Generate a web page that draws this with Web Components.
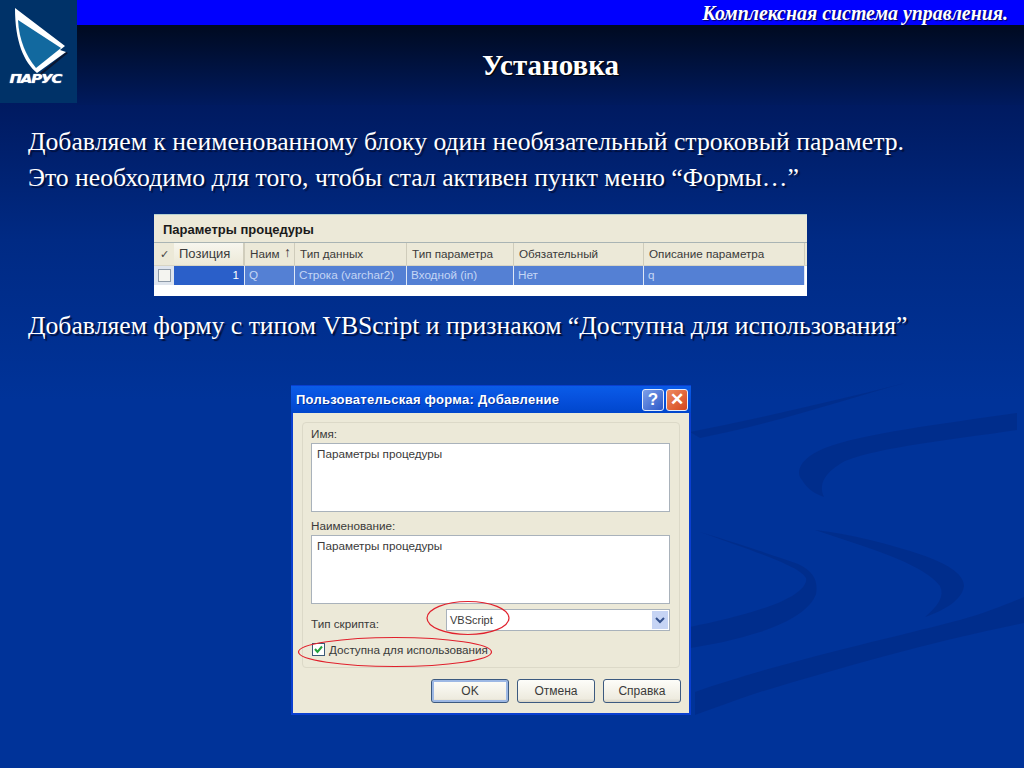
<!DOCTYPE html>
<html lang="ru">
<head>
<meta charset="utf-8">
<title>Установка</title>
<style>
  html, body { margin: 0; padding: 0; }
  body { width: 1024px; height: 768px; overflow: hidden; background: #003399; font-family: "Liberation Serif", serif; }
</style>
</head>
<body>
<slide-page>
  <slide-header slot="header" caption="Комплексная система управления." title="Установка"></slide-header>
  <slide-text>Добавляем к неименованному блоку один необязательный строковый параметр.</slide-text>
  <slide-text>Это необходимо для того, чтобы стал активен пункт меню “Формы…”</slide-text>
  <params-grid></params-grid>
  <slide-text class="third">Добавляем форму с типом VBScript и признаком “Доступна для использования”</slide-text>
  <form-dialog></form-dialog>
</slide-page>

<script>
// Slide frame: background swooshes plus the flow of the content
class SlidePage extends HTMLElement {
  constructor() {
    super();
    this.attachShadow({ mode: 'open' });
  }

  connectedCallback() {
    this.shadowRoot.innerHTML = `
      <style>
        :host { display: block; position: relative; width: 1024px; height: 768px; overflow: hidden;
          background: linear-gradient(#001a60 0, #001a60 103px, #002a84 240px, #003399 400px); }
        svg { position: absolute; left: 0; top: 0; }
        .content { position: relative; display: flex; flex-direction: column; padding-top: 21px; }
        header { position: relative; }
      </style>
      <svg width="1024" height="768" viewBox="0 0 1024 768">
        <g fill="#002c88" opacity=".75">
          <path d="M690 432C760 418 830 402 905 383C850 398 780 422 700 438Z"/>
          <path d="M1017 413C940 424 860 434 825 448C800 458 795 472 802 480C808 490 816 494 824 497C818 484 825 472 845 461C880 447 950 440 1017 430Z"/>
          <path d="M700 532C740 544 775 556 798 564C815 572 818 582 816 594C810 610 790 622 760 632C735 640 710 645 690 648V627C715 622 745 615 770 606C795 597 808 586 806 578C800 566 750 550 700 532Z"/>
          <path d="M815 530C850 534 890 544 925 556C950 565 964 575 964 586C962 600 945 610 925 617C938 606 945 596 940 586C930 572 900 558 860 545C845 540 830 535 815 530Z"/>
          <path d="M1024 597V623C930 642 840 668 760 692C735 700 715 708 695 715V692C780 662 900 636 960 620C985 613 1005 605 1024 597Z"/>
        </g>
      </svg>
      <header><slot name="header"></slot></header>
      <div class="content"><slot></slot></div>
    `;
  }
}
customElements.define('slide-page', SlidePage);

class SlideHeader extends HTMLElement {
  constructor() {
    super();
    this.attachShadow({ mode: 'open' });
  }

  connectedCallback() {
    this.shadowRoot.innerHTML = `
      <style>
        :host { display: flex; height: 103px; font-family: "Liberation Serif", serif; color: #fff; }
        .logo { width: 77px; flex: none; background: #003268; display: flex; flex-direction: column; }
        .logo svg { display: block; }
        .brand { font: italic 900 12.5px/10px "DejaVu Sans", sans-serif; letter-spacing: -1px; margin: -2px 0 0 14px; width: 45px; transform: scaleX(1.2); text-shadow: 0 0 1px #fff; }
        .right { flex: 1; display: flex; flex-direction: column; }
        .top { height: 25px; background: #0000ff; text-align: right; padding-right: 16px; white-space: nowrap;
          font: italic bold 19.9px/27px "Liberation Serif", serif; text-shadow: 1px 1px 1px #000066; }
        .mid { flex: 1; background: linear-gradient(#000a20, #001a5e); text-align: center;
          font: bold 29px/80px "Liberation Serif", serif; text-shadow: 1px 1px 1px #000; }
        .strip { height: 9px; background: linear-gradient(90deg, #1236b0, #3a4fb0); }
      </style>
      <div class="logo">
        <svg width="77" height="76" viewBox="0 0 77 76">
          <path d="M39 74L66 52L68 53L40 76Z" fill="#0a1630"/>
          <path d="M15 8L65 46L60 50L66 52L37 73C24 62 15 42 15 8Z" fill="#fff"/>
          <path d="M18 20L61 48L36 68C26 56 19 40 18 20Z" fill="#12699f"/>
        </svg>
        <div class="brand">ПАРУС</div>
      </div>
      <div class="right">
        <div class="top">${this.getAttribute('caption')}</div>
        <div class="mid">${this.getAttribute('title')}</div>
        <div class="strip"></div>
      </div>
    `;
  }
}
customElements.define('slide-header', SlideHeader);

class SlideText extends HTMLElement {
  constructor() {
    super();
    this.attachShadow({ mode: 'open' });
  }

  connectedCallback() {
    this.shadowRoot.innerHTML = `
      <style>
        :host { display: block; padding-left: 28px; color: #fff; white-space: nowrap;
          font: 25.7px/36px "Liberation Serif", serif; text-shadow: 2px 2px 1px #00103c; }
        :host(.third) { margin-top: 12px; }
      </style>
      <slot></slot>
    `;
  }
}
customElements.define('slide-text', SlideText);

// Screenshot of the "Параметры процедуры" grid
class ParamsGrid extends HTMLElement {
  constructor() {
    super();
    this.attachShadow({ mode: 'open' });
  }

  connectedCallback() {
    const cols = [
      ['Наим', 50], ['Тип данных', 112], ['Тип параметра', 107], ['Обязательный', 130], ['Описание параметра', 161]
    ];
    const vals = ['Q', 'Строка (varchar2)', 'Входной (in)', 'Нет', 'q'];
    const head = cols.map(([t, w], i) => `<div class="h" style="width:${w}px">${t}${i === 0 ? '<i>↑</i>' : ''}</div>`).join('');
    const row = cols.map(([, w], i) => `<div class="c" style="width:${w}px">${vals[i]}</div>`).join('');
    this.shadowRoot.innerHTML = `
      <style>
        :host { display: block; width: 653px; height: 82px; margin: 18px 0 0 154px; background: #fff;
          font: 11.7px/1 "Liberation Sans", sans-serif; color: #3a3a3a; overflow: hidden; }
        .title { box-sizing: border-box; height: 29px; background: #ece9d8; border-top: 1px solid #b4d0d0; border-bottom: 1px solid #a9b4b4;
          font-size: 13px; font-weight: bold; padding: 8px 0 0 9px; color: #1a1a1a; }
        .heads, .row { display: flex; }
        .heads { box-sizing: border-box; height: 23px; background: #ece9d8; border-bottom: 1px solid #d8d5c4; }
        .check { width: 20px; flex: none; text-align: center; line-height: 22px; color: #444; font-size: 11px; }
        .h { box-sizing: border-box; flex: none; padding: 5px 0 0 5px; border-right: 1px solid #cfccbb; white-space: nowrap; overflow: hidden; position: relative; }
        .h i { font-style: normal; font-size: 14px; font-weight: bold; position: absolute; right: 3px; top: 2px; }
        .pos { width: 71px; font-size: 13px; padding: 4px 0 0 5px; background: linear-gradient(#f7f6ee, #ece9d8); border-right: 2px solid #d0cdbc; }
        .row { width: 651px; height: 19px; background: #5480d4; color: #c4d6f4; }
        .box { width: 20px; flex: none; background: #dfe5ee; display: flex; align-items: center; justify-content: center; }
        .box b { width: 11px; height: 11px; background: #f4f4f0; border: 1px solid #8e9aa8; }
        .num { box-sizing: border-box; width: 71px; text-align: right; padding: 3px 5px 0 0; background: #2a5fc9; color: #fff; border-right: 1px solid #dfe8f6; }
        .c { box-sizing: border-box; flex: none; padding: 3px 0 0 4px; border-right: 1px solid #dfe8f6; white-space: nowrap; }
      </style>
      <div class="title">Параметры процедуры</div>
      <div class="heads"><div class="check">✓</div><div class="h pos">Позиция</div>${head}</div>
      <div class="row"><div class="box"><b></b></div><div class="num">1</div>${row}</div>
    `;
  }
}
customElements.define('params-grid', ParamsGrid);

// Screenshot of the XP style dialog, with the two red ovals drawn over it
class FormDialog extends HTMLElement {
  constructor() {
    super();
    this.attachShadow({ mode: 'open' });
  }

  connectedCallback() {
    this.shadowRoot.innerHTML = `
      <style>
        :host { display: block; position: relative; box-sizing: border-box; width: 400px; height: 330px; margin: 41px 0 0 291px;
          background: #ece9d8; border: solid #0a3fd0; border-width: 1px 2px 2px 2px;
          font: 11.7px/1 "Liberation Sans", sans-serif; color: #3a3a3a; }
        .bar { display: flex; align-items: center; height: 27px; margin: 0 -2px; padding: 0 3px 0 5px; box-sizing: border-box;
          background: linear-gradient(#0a5ce8, #0650dc 50%, #0046cc); color: #fff; font: bold 13px "Liberation Sans", sans-serif; letter-spacing: .25px; text-shadow: 1px 1px 0 #003099; }
        .bar span { flex: 1; }
        .btn { box-sizing: border-box; width: 22px; height: 22px; margin-left: 2px; border: 1px solid #e4ecfb; border-radius: 3px; display: flex; align-items: center; justify-content: center; font: bold 17px "Liberation Sans", sans-serif; text-shadow: none; }
        .help { background: linear-gradient(135deg, #7d9fe8, #2c58c8); }
        .close { background: linear-gradient(135deg, #ee8a60, #d4461c); }
        .body { padding: 9px 9px 0 9px; }
        .group { box-sizing: border-box; height: 246px; border: 1px solid #dcd9c8; border-radius: 4px; padding: 5px 9px 0 8px; }
        label { display: block; height: 15px; line-height: 12px; }
        .box { box-sizing: border-box; height: 69px; background: #fff; border: 1px solid #a9b2bb; padding: 4px 5px; }
        .gap { margin-top: 8px; }
        .type { display: flex; align-items: flex-end; margin-top: 5px; }
        .type span { width: 135px; padding-bottom: 1px; }
        .combo { box-sizing: border-box; flex: 1; height: 22px; background: #fff; border: 1px solid #a9b2bb; display: flex; align-items: center; padding: 0 1px 0 3px; }
        .combo span { width: auto; flex: 1; padding: 0; font-size: 11px; }
        .arrow { width: 16px; height: 18px; background: #c6d4f4; display: flex; align-items: center; justify-content: center; }
        .chk { display: flex; align-items: center; margin-top: 12px; gap: 4px; padding-left: 1px; }
        .chk b { box-sizing: border-box; width: 13px; height: 13px; background: #fff; border: 1px solid #3b5a78; display: flex; }
        .actions { display: flex; justify-content: flex-end; gap: 8px; margin: 11px -1px 0 0; }
        .act { box-sizing: border-box; width: 78px; height: 24px; border: 1px solid #3c5a80; border-radius: 3px; background: linear-gradient(#fdfdf9, #eeebdf 85%, #d8d4c4); display: flex; align-items: center; justify-content: center; font-size: 12px; }
        .def { box-shadow: inset 0 0 0 2px #9db8e4; }
        svg.ovals { position: absolute; left: -2px; top: -1px; pointer-events: none; }
      </style>
      <div class="bar"><span>Пользовательская форма: Добавление</span><div class="btn help">?</div><div class="btn close">✕</div></div>
      <div class="body">
        <div class="group">
          <label>Имя:</label>
          <div class="box">Параметры процедуры</div>
          <label class="gap">Наименование:</label>
          <div class="box">Параметры процедуры</div>
          <div class="type">
            <span>Тип скрипта:</span>
            <div class="combo"><span>VBScript</span>
              <div class="arrow"><svg width="10" height="7" viewBox="0 0 10 7"><path d="M1 1L5 5L9 1" fill="none" stroke="#33508c" stroke-width="2"/></svg></div>
            </div>
          </div>
          <div class="chk">
            <b><svg width="11" height="11" viewBox="0 0 11 11"><path d="M2 5L4.5 8L9 2.5" fill="none" stroke="#22a03a" stroke-width="2"/></svg></b>
            Доступна для использования
          </div>
        </div>
        <div class="actions">
          <div class="act def">OK</div><div class="act">Отмена</div><div class="act">Справка</div>
        </div>
      </div>
      <svg class="ovals" width="400" height="330" viewBox="291 385 400 330">
        <g fill="none" stroke="#e0202c" stroke-width="1.2">
          <ellipse cx="468" cy="618" rx="41" ry="16.5"/>
          <ellipse cx="395" cy="652" rx="96.5" ry="14.5"/>
        </g>
      </svg>
    `;
  }
}
customElements.define('form-dialog', FormDialog);
</script>
</body>
</html>
